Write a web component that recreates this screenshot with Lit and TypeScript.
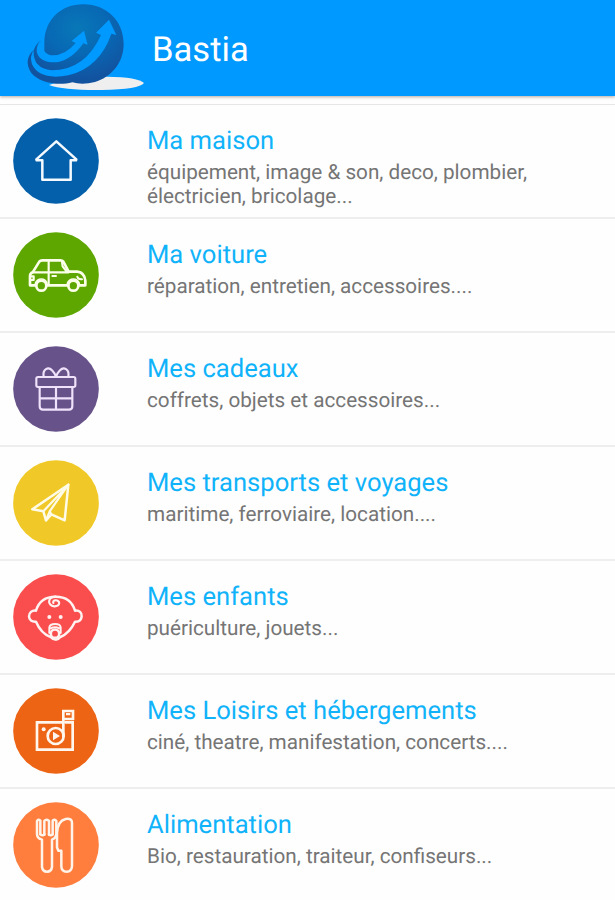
import { LitElement, html, css, svg, TemplateResult } from "lit";
import { customElement, property } from "lit/decorators.js";

interface Category {
  title: string;
  detail: string;
  color: string;
  icon: TemplateResult;
}

/* Icons share a 258-unit disc whose origin is at (39, 30). */
const house = svg`
  <path stroke="#f4faff" stroke-width="7.5" d="M169 100 L109 154 L110 157 H127 V215 H212 V157 H228 L229 154 Z"/>`;

const car = svg`
  <g stroke="#fbffe9" stroke-width="8">
    <path d="M108 190 H90 V162 Q90 154 98 151 L118 119 Q121 115 127 115 H181 Q187 115 190 119 L206 149 H232 Q254 152 256 176 V190 H236 M205 190 H140"/>
    <path stroke-width="6.5" d="M98 151 H206 M146 116 V189 M186 119 L188 133 L200 149 M92 163 H101 V174 H91"/>
    <path stroke-width="6" d="M157 162 H168 M232 164 Q233 173 246 172"/>
    <circle cx="124" cy="191" r="15"/>
    <circle cx="220" cy="191" r="15"/>
    <path stroke-width="5" d="M106 184 Q111 171 124 171 Q137 171 141 184 M202 184 Q207 171 220 171 Q233 171 238 184"/>
  </g>`;

const gift = svg`
  <g stroke="#f0e2fa" stroke-width="6.5">
    <rect x="109" y="123" width="117" height="30" rx="5"/>
    <path d="M119 154 V211 Q119 221 129 221 H207 Q217 221 217 211 V154 M168 154 V220 M120 187 H216"/>
    <path d="M131 122 C127 99 145 91 156 103 Q165 112 168 123 Q171 112 180 103 C191 91 209 99 205 122"/>
  </g>`;

const plane = svg`
  <g stroke="#fffbe6" stroke-width="7.5">
    <path d="M205 104 L97 178 L130 184 L138 211 L154 193 L194 211 Z"/>
    <path stroke-width="6.5" d="M205 104 L130 184 M205 104 L149 184 L138 211 M149 184 L154 193"/>
  </g>`;

const baby = svg`
  <g stroke="#fff2f0" stroke-width="7.5">
    <path d="M108 140 C116 112 137 98 167 98 C197 98 217 112 225 140 C238 138 246 146 245 157 C244 168 237 174 225 173 C215 194 202 210 181 219 C173 230 160 229 152 219 C130 211 117 194 108 173 C96 174 87 168 87 157 C87 146 96 138 108 140"/>
    <path stroke-width="6.5" d="M167 98 C142 99 141 124 163 127 C182 128 182 107 165 109 Q158 111 160 117"/>
    <circle cx="165" cy="209" r="12.5"/>
    <path stroke-width="6" d="M148 207 L148 190 Q150 180 165 180 Q181 180 182 190 V207 M152 193 Q165 187 178 193"/>
  </g>
  <circle cx="148" cy="159" r="6" fill="#fff2f0"/>
  <circle cx="182" cy="159" r="6" fill="#fff2f0"/>`;

const camera = svg`
  <g stroke="#fff6ee" stroke-width="8" stroke-linejoin="miter">
    <path d="M186 133 H111 V215 H218 V133 H196"/>
    <path d="M190 174 V99 H219 V123 H191"/>
    <circle cx="167" cy="174" r="24"/>
  </g>
  <path fill="#fff6ee" d="M159 161 L180 174 L159 187 Z M198 105 H211 V112 H198 Z"/>
  <circle cx="131" cy="154" r="6" fill="#fff6ee"/>`;

const cutlery = svg`
  <g stroke="#fff4ea" stroke-width="7.5" transform="translate(0 -18)">
    <path d="M111 105 Q115 98 121 104 V145 M111 105 V145 Q112 157 126 161 V243 Q128 257 141 257 Q154 257 156 243 V161 Q167 157 169 145 V105 Q164 98 158 104 V145 M133 146 V105 Q139 98 147 105 V146"/>
    <path d="M121 145 Q128 151 133 145 M147 145 Q152 151 158 145"/>
    <path d="M184 194 H175 L171 184 V142 Q172 105 197 99 Q216 96 216 110 V240 Q215 257 200 257 Q184 257 184 240 Z"/>
  </g>`;

const categories: Category[] = [
  { title: "Ma maison", detail: "équipement, image & son, deco, plombier, électricien, bricolage...", color: "#0560ab", icon: house },
  { title: "Ma voiture", detail: "réparation, entretien, accessoires....", color: "#5ea700", icon: car },
  { title: "Mes cadeaux", detail: "coffrets, objets et accessoires...", color: "#67538a", icon: gift },
  { title: "Mes transports et voyages", detail: "maritime, ferroviaire, location....", color: "#f0c928", icon: plane },
  { title: "Mes enfants", detail: "puériculture, jouets...", color: "#fa4e4e", icon: baby },
  { title: "Mes Loisirs et hébergements", detail: "ciné, theatre, manifestation, concerts....", color: "#ed6415", icon: camera },
  { title: "Alimentation", detail: "Bio, restauration, traiteur, confiseurs...", color: "#ff7e3e", icon: cutlery },
];

@customElement("category-row")
class CategoryRow extends LitElement {
  @property({ attribute: false }) category!: Category;

  static styles = css`
    :host {
      display: flex;
      box-sizing: border-box;
      height: 114px;
      padding: 13px 40px 0 13px;
      gap: 48px;
      border-bottom: 2px solid #eeeeee;
    }
    .icon {
      flex: none;
      width: 86px;
      height: 86px;
    }
    .text {
      width: 400px;
      padding-top: 7px;
    }
    .title {
      font-size: 25.6px;
      line-height: 32px;
      color: #10b3fa;
      white-space: nowrap;
    }
    .detail {
      padding-top: 4px;
      font-size: 20.7px;
      line-height: 24px;
      color: #757575;
    }
  `;

  render() {
    const { title, detail, color, icon } = this.category;
    return html`
      <svg class="icon" viewBox="39 30 258 258" fill="none" stroke-linejoin="round" stroke-linecap="round">
        <circle cx="168" cy="159" r="128.5" fill=${color} />
        ${icon}
      </svg>
      <div class="text">
        <div class="title">${title}</div>
        <div class="detail">${detail}</div>
      </div>
    `;
  }
}

@customElement("app-root")
class AppRoot extends LitElement {
  static styles = css`
    :host {
      display: block;
      height: 900px;
      overflow: hidden;
      background: #fefefe;
      font-family: Roboto, "Liberation Sans", sans-serif;
      text-rendering: geometricPrecision;
    }
    .bar {
      display: flex;
      align-items: center;
      height: 96px;
      background: #0099ff;
      box-shadow: 0 1px 3px rgba(60, 40, 30, 0.4);
    }
    .logo {
      flex: none;
      width: 152px;
      height: 96px;
    }
    .heading {
      margin: 0;
      padding-top: 4px;
      font-size: 34.6px;
      line-height: 42px;
      font-weight: 400;
      color: #ffffff;
    }
    .list {
      margin-top: 8px;
      border-top: 1px solid #e6e6e6;
    }
    .last {
      border-bottom-color: transparent;
    }
  `;

  render() {
    return html`
      <header class="bar">
        <svg class="logo" viewBox="0 0 456 288">
          <defs>
            <radialGradient id="globe" cx="0.52" cy="0.3" r="0.65">
              <stop offset="0" stop-color="#0878b8" />
              <stop offset="0.5" stop-color="#0868b4" />
              <stop offset="1" stop-color="#1253a0" />
            </radialGradient>
          </defs>
          <path fill="#f0eff0" d="M147 255 Q200 235 320 230 Q415 231 432 249 Q418 268 305 270 Q190 271 147 255 Z" />
          <path fill="url(#globe)" d="M133 130 C133 60 182 13 250 13 C322 13 371 65 371 132 C371 190 332 232 285 246 Q247 256 217 247 C170 259 116 246 94 219 C78 195 79 169 101 151 Q107 132 122 122 Q123 160 133 160 Z" />
          <path fill="#0099ff" d="M122 122 Q127 162 156 166 Q195 167 227 129 L215 123 L252 92 L263 134 L250 130 Q215 180 170 187 Q116 189 110 153 Q110 133 122 122 Z" />
          <path fill="#0099ff" d="M101 151 Q98 205 155 211 Q255 211 303 105 L288 98 L327 59 L349 105 L334 101 Q300 202 205 226 Q119 242 96 193 Q88 169 101 151 Z" />
        </svg>
        <h1 class="heading">Bastia</h1>
      </header>
      <main class="list">
        ${categories.map(
          (c, i) => html`<category-row class=${i === categories.length - 1 ? "last" : ""} .category=${c}></category-row>`
        )}
      </main>
    `;
  }
}
